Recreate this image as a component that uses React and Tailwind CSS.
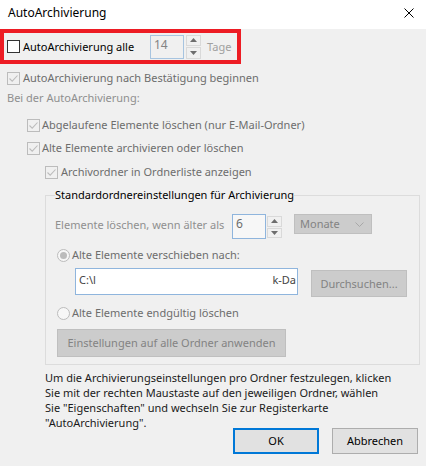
import React from 'react';

function CheckBox({ checked, disabled }) {
  return (
    <span
      className={`flex h-[13px] w-[13px] shrink-0 items-center justify-center border ${
        disabled ? 'border-[#bcbcbc] bg-[#f0f0f0]' : 'border-[#333333] bg-white'
      }`}
    >
      {checked ? (
        <svg width="11" height="11" viewBox="0 0 11 11">
          <path d="M1.5 5.5 L4.2 8.2 L9.5 2.5" fill="none" stroke="#bcbcbc" strokeWidth="1.1" />
        </svg>
      ) : null}
    </span>
  );
}

function Radio({ checked }) {
  return (
    <span className="flex h-[13px] w-[13px] shrink-0 items-center justify-center rounded-full border border-[#bcbcbc] bg-[#f7f7f7]">
      {checked ? <span className="h-[7px] w-[7px] rounded-full bg-[#bcbcbc]" /> : null}
    </span>
  );
}

function Spinner({ h }) {
  return (
    <div className={`flex w-[15px] flex-col gap-px ${h}`}>
      <div className="flex flex-1 items-center justify-center border border-[#d9d9d9] bg-[#f0f0f0]">
        <svg width="7" height="4" viewBox="0 0 7 4">
          <path d="M0 4 L3.5 0 L7 4 Z" fill="#6d6d6d" />
        </svg>
      </div>
      <div className="flex flex-1 items-center justify-center border border-[#d9d9d9] bg-[#f0f0f0]">
        <svg width="7" height="4" viewBox="0 0 7 4">
          <path d="M0 0 L3.5 4 L7 0 Z" fill="#6d6d6d" />
        </svg>
      </div>
    </div>
  );
}

export default function App() {
  return (
    <div
      className="h-[466px] w-[426px] overflow-hidden bg-[#f0f0f0] text-[11px] leading-[16px] text-black"
      style={{ fontFamily: '"Segoe UI", "Noto Sans", sans-serif' }}
    >
      {/* title bar */}
      <div className="flex h-[29px] items-center justify-between bg-white pl-[8px] pr-[12px]">
        <span className="-mt-[3px] text-[12px]">AutoArchivierung</span>
        <svg width="10" height="10" viewBox="0 0 10 10" className="-mt-[3px]">
          <path d="M0.5 0.5 L9.5 9.5 M9.5 0.5 L0.5 9.5" stroke="#000" strokeWidth="1" />
        </svg>
      </div>

      {/* highlighted row */}
      <div className="flex h-[35px] w-[241px] items-center border-4 border-[#ed1c24] pl-[3px]">
        <CheckBox />
        <span className="ml-[3px] w-[127px]">AutoArchivierung alle</span>
        <div className="flex h-[24px] w-[34px] items-start border border-[#a7c4e0] bg-[#f0f0f0] pl-[3px] pt-[1px] text-[12px] text-[#838383]">
          14
        </div>
        <div className="ml-[2px]">
          <Spinner h="h-[24px]" />
        </div>
        <span className="ml-[6px] text-[#a0a0a0]">Tage</span>
      </div>

      <div className="mt-[4px] flex h-[20px] items-center pl-[7px] text-[#6d6d6d]">
        <CheckBox checked disabled />
        <span className="ml-[3px]">AutoArchivierung nach Bestätigung beginnen</span>
      </div>
      <div className="flex h-[20px] items-center pl-[7px] text-[#8f8f8f]">Bei der AutoArchivierung:</div>

      <div className="mt-[7px] flex h-[20px] items-center pl-[27px] text-[#6d6d6d]">
        <CheckBox checked disabled />
        <span className="ml-[2px]">Abgelaufene Elemente löschen (nur E-Mail-Ordner)</span>
      </div>
      <div className="mt-[3px] flex h-[20px] items-center pl-[27px] text-[#6d6d6d]">
        <CheckBox checked disabled />
        <span className="ml-[2px]">Alte Elemente archivieren oder löschen</span>
      </div>
      <div className="mt-[4px] flex h-[20px] items-center pl-[45px] text-[#6d6d6d]">
        <CheckBox checked disabled />
        <span className="ml-[3px]">Archivordner in Ordnerliste anzeigen</span>
      </div>

      {/* group box */}
      <fieldset className="ml-[45px] mt-[5px] w-[375px] border border-[#dcdcdc] pb-[7px] pl-[9px]">
        <legend className="leading-[16px]">Standardordnereinstellungen für Archivierung</legend>

        <div className="mt-[11px] flex h-[25px] items-start">
          <span className="mt-[3px] w-[177px] text-[#8f8f8f]">Elemente löschen, wenn älter als</span>
          <div className="flex h-[25px] w-[34px] items-start border border-[#8fb5dd] bg-[#f7f7f7] pl-[3px] pt-[1px] text-[12px] text-[#6d6d6d]">
            6
          </div>
          <div className="ml-[1px] mt-[2px]">
            <Spinner h="h-[22px]" />
          </div>
          <div className="ml-[12px] flex h-[20px] w-[78px] items-center justify-between border border-[#bfbfbf] bg-[#cccccc] pl-[5px] pr-[7px] text-[#838383]">
            <span>Monate</span>
            <svg width="9" height="5" viewBox="0 0 9 5">
              <path d="M0.5 0.5 L4.5 4.5 L8.5 0.5" fill="none" stroke="#a8a8a8" strokeWidth="1" />
            </svg>
          </div>
        </div>

        <div className="mt-[6px] flex h-[20px] items-center pl-[2px] text-[#6d6d6d]">
          <Radio checked />
          <span className="ml-[2px]">Alte Elemente verschieben nach:</span>
        </div>

        <div className="mt-[3px] flex items-start">
          <div className="ml-[20px] flex h-[27px] w-[223px] items-center justify-between border border-[#8fb5dd] bg-white pl-[3px] pr-[1px] text-[#444444]">
            <span className="-mt-[3px]">C:\l</span>
            <span className="-mt-[3px]">k-Da</span>
          </div>
          <div className="ml-[13px] mt-[2px] flex h-[27px] w-[96px] items-center justify-center border border-[#bfbfbf] bg-[#cccccc] text-[#838383]">
            Durchsuchen...
          </div>
        </div>

        <div className="mt-[6px] flex h-[20px] items-center pl-[2px] text-[#6d6d6d]">
          <Radio />
          <span className="ml-[2px]">Alte Elemente endgültig löschen</span>
        </div>

        <div className="ml-[2px] mt-[6px] flex h-[28px] w-[229px] items-center justify-center border border-[#bfbfbf] bg-[#cccccc] text-[#838383]">
          Einstellungen auf alle Ordner anwenden
        </div>
      </fieldset>

      <p className="ml-[45px] mt-[5px] whitespace-nowrap leading-[15px] text-[#1a1a1a]">
        Um die Archivierungseinstellungen pro Ordner festzulegen, klicken
        <br />
        Sie mit der rechten Maustaste auf den jeweiligen Ordner, wählen
        <br />
        Sie "Eigenschaften" und wechseln Sie zur Registerkarte
        <br />
        "AutoArchivierung".
      </p>

      <div className="mr-[8px] -mt-[2px] flex justify-end gap-[13px]">
        <button className="flex h-[26px] w-[86px] items-center justify-center border-2 border-[#0078d7] bg-[#e1e1e1]">
          OK
        </button>
        <button className="flex h-[26px] w-[86px] items-center justify-center border border-[#adadad] bg-[#e1e1e1]">
          Abbrechen
        </button>
      </div>
    </div>
  );
}
